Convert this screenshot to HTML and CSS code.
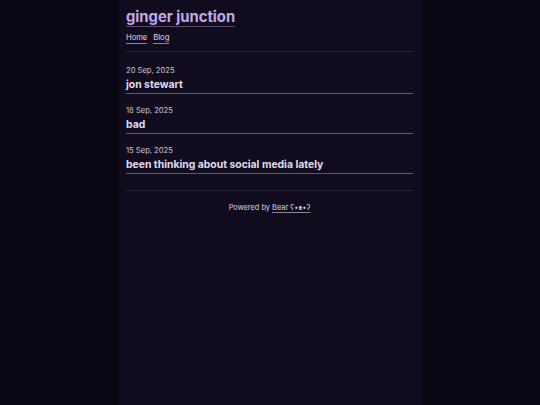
FILE: index.html
```html
<!DOCTYPE html>
<html lang="en">
<head>
<meta charset="utf-8">
<title>ginger junction</title>
<link rel="stylesheet" href="styles.css">
</head>
<body>
<div class="page">
  <header class="header">
    <a class="site-title" href="#">ginger junction</a>
    <nav class="nav">
      <a href="#">Home</a>
      <a href="#">Blog</a>
    </nav>
  </header>
  <main class="posts">
    <article class="post">
      <div class="date">20 Sep, 2025</div>
      <a class="post-title" href="#">jon stewart</a>
    </article>
    <article class="post">
      <div class="date">18 Sep, 2025</div>
      <a class="post-title" href="#">bad</a>
    </article>
    <article class="post">
      <div class="date">15 Sep, 2025</div>
      <a class="post-title" href="#">been thinking about social media lately</a>
    </article>
  </main>
  <footer class="footer">
    Powered by <a href="#">Bear ʕ•ᴥ•ʔ</a>
  </footer>
</div>
</body>
</html>
```
FILE: styles.css
```css
html, body {
  margin: 0;
  padding: 0;
}
body {
  background: #090714;
  font-family: Inter, "Noto Sans", sans-serif;
  color: #e0daee;
  min-height: 405px;
}
a {
  color: inherit;
  text-decoration: none;
}
.page {
  width: 304px;
  margin: 0 auto;
  min-height: 405px;
  background: #100c1d;
  padding: 0 9px 0 8px;
  box-sizing: border-box;
}
.header {
  padding-top: 6px;
  border-bottom: 1px solid #2a2538;
  padding-bottom: 7px;
}
.site-title {
  display: inline-block;
  font-size: 14.8px;
  font-weight: 700;
  color: #c4a8e8;
  line-height: 18px;
  border-bottom: 1px solid #5a4f6c;
}
.nav {
  display: flex;
  gap: 6px;
  margin-top: 6px;
  font-size: 7.6px;
  line-height: 10px;
}
.nav a {
  border-bottom: 1px solid #8a8598;
}
.posts {
  padding-top: 14px;
  padding-bottom: 16px;
  border-bottom: 1px solid #2a2538;
}
.post + .post {
  margin-top: 12px;
}
.date {
  font-size: 7.6px;
  line-height: 10px;
  color: #cdc8d9;
}
.post-title {
  display: block;
  font-size: 10.4px;
  font-weight: 700;
  line-height: 14px;
  padding-bottom: 1px;
  border-bottom: 1px solid #5f596f;
  margin-top: 2px;
}
.footer {
  text-align: center;
  font-size: 7.4px;
  line-height: 10px;
  padding-top: 12px;
  color: #d8d3e3;
}
.footer a {
  border-bottom: 1px solid #8a8598;
}
```
